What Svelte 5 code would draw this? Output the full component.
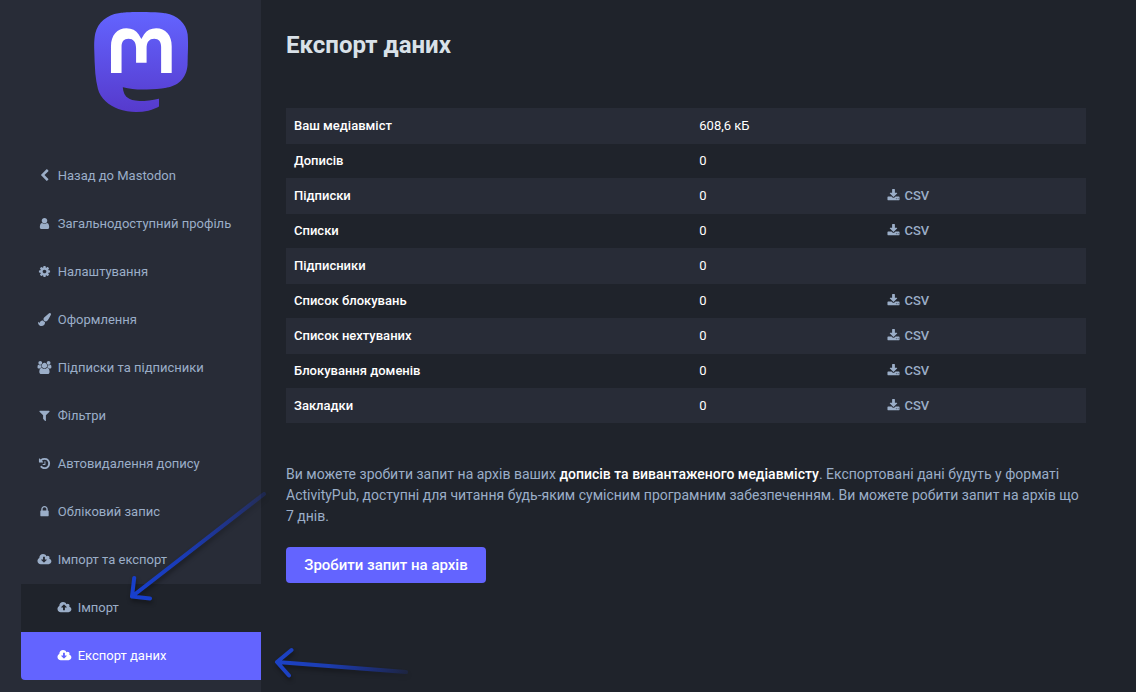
<script>
  const cloud = 'm640 WWWq0 159-112.5 271.5t-271.5 112.5h-1088q-185 0-316.5-131.5t-131.5-316.5q0-130 70-240t188-165q-2-30-2-43 0-212 150-362t362-150q156 0 285.5 87t188.5 231q71-62 166-62 106 0 181 75t75 181q0 76-41 138 130 31 213.5 135.5t83.5 238.5z';

  // Glyphs drawn on a 1792-unit em; w is the advance of the viewBox.
  const icons = {
    back: { w: 1792, d: 'M1427 301l-531 531 531 531q19 19 19 45t-19 45l-166 166q-19 19-45 19t-45-19l-742-742q-19-19-19-45t19-45l742-742q19-19 45-19t45 19l166 166q19 19 19 45t-19 45z' },
    user: { w: 1792, d: 'M1536 1399q0 109-62.5 187t-150.5 78h-854q-88 0-150.5-78t-62.5-187q0-85 8.5-160.5t31.5-152 58.5-131 94-89 134.5-34.5q131 128 313 128t313-128q76 0 134.5 34.5t94 89 58.5 131 31.5 152 8.5 160.5zm-256-887q0 159-112.5 271.5t-271.5 112.5-271.5-112.5-112.5-271.5 112.5-271.5 271.5-112.5 271.5 112.5 112.5 271.5z' },
    cog: { w: 1792, d: 'M1152 896q0-106-75-181t-181-75-181 75-75 181 75 181 181 75 181-75 75-181zm512-109v222q0 12-8 23t-20 13l-185 28q-19 54-39 91 35 50 107 138 10 12 10 25t-9 23q-27 37-99 108t-94 71q-12 0-26-9l-138-108q-44 23-91 38-16 136-29 186-7 28-36 28h-222q-14 0-24.5-8.5t-11.5-21.5l-28-184q-49-16-90-37l-141 107q-10 9-25 9-14 0-25-11-126-114-165-168-7-10-7-23 0-12 8-23 15-21 51-66.5t54-70.5q-27-50-41-99l-183-27q-13-2-21-12.5t-8-23.5v-222q0-12 8-23t19-13l186-28q14-46 39-92-40-57-107-138-10-12-10-24 0-10 9-23 26-36 98.5-107.5t94.5-71.5q13 0 26 10l138 107q44-23 91-38 16-136 29-186 7-28 36-28h222q14 0 24.5 8.5t11.5 21.5l28 184q49 16 90 37l142-107q9-9 24-9 13 0 25 10 129 119 165 170 7 8 7 22 0 12-8 23-15 21-51 66.5t-54 70.5q26 50 41 98l183 28q13 2 21 12.5t8 23.5z' },
    brush: { w: 1792, d: 'M1615 0q70 0 122.5 46.5t52.5 116.5q0 63-45 151-332 629-465 752-97 91-218 91-126 0-216.5-92.5t-90.5-219.5q0-128 92-212l638-579q59-54 130-54zm-909 1034q39 76 106.5 130t150.5 76l1 71q4 213-129.5 347t-348.5 134q-123 0-218-46.5t-152.5-127.5-86.5-183-29-220q7 5 41 30t62 44.5 59 36.5 46 17q41 0 55-37 25-66 57.5-112.5t69.5-76 88-47.5 103-25.5 125-10.5z' },
    users: { w: 2048, d: 'M657 896q-162 5-265 128h-134q-82 0-138-40.5t-56-118.5q0-353 124-353 6 0 43.5 21t97.5 42.5 119 21.5q67 0 133-23-5 37-5 66 0 159 93 256zm1071 637q0 120-73 189.5t-194 69.5h-874q-121 0-194-69.5t-73-189.5q0-53 3.5-103.5t14-109 26.5-108.5 43-97.5 62-81 85.5-53.5 111.5-20q10 0 43 21.5t73 48 107 48 135 21.5 135-21.5 107-48 73-48 43-21.5q61 0 111.5 20t85.5 53.5 62 81 43 97.5 26.5 108.5 14 109 3.5 103.5zm-1024-1277q0 106-75 181t-181 75-181-75-75-181 75-181 181-75 181 75 75 181zm704 384q0 159-112.5 271.5t-271.5 112.5-271.5-112.5-112.5-271.5 112.5-271.5 271.5-112.5 271.5 112.5 112.5 271.5zm576 225q0 78-56 118.5t-138 40.5h-134q-103-123-265-128 93-97 93-256 0-29-5-66 66 23 133 23 59 0 119-21.5t97.5-42.5 43.5-21q124 0 124 353zm-128-609q0 106-75 181t-181 75-181-75-75-181 75-181 181-75 181 75 75 181z' },
    filter: { w: 1792, d: 'M1595 295q17 41-14 70l-493 493v742q0 42-39 59-13 5-25 5-27 0-45-19l-256-256q-19-19-19-45v-486l-493-493q-31-29-14-70 17-39 59-39h1280q42 0 59 39z' },
    history: { w: 1792, d: 'M1664 896q0 156-61 298t-164 245-245 164-298 61q-172 0-327-72.5t-264-204.5q-7-10-6.5-22.5t8.5-20.5l137-138q10-9 25-9 16 2 23 12 73 95 179 147t225 52q104 0 198.5-40.5t163.5-109.5 109.5-163.5 40.5-198.5-40.5-198.5-109.5-163.5-163.5-109.5-198.5-40.5q-98 0-188 35.5t-160 101.5l137 138q31 30 14 69-17 40-59 40h-448q-26 0-45-19t-19-45v-448q0-42 40-59 39-17 69 14l130 129q107-101 244.5-156.5t284.5-55.5q156 0 298 61t245 164 164 245 61 298zm-640-288v448q0 14-9 23t-23 9h-320q-14 0-23-9t-9-23v-64q0-14 9-23t23-9h224v-352q0-14 9-23t23-9h64q14 0 23 9t9 23z' },
    lock: { w: 1792, d: 'M640 768h512v-192q0-106-75-181t-181-75-181 75-75 181v192zm832 96v576q0 40-28 68t-68 28h-960q-40 0-68-28t-28-68v-576q0-40 28-68t68-28h32v-192q0-184 132-316t316-132 316 132 132 316v192h32q40 0 68 28t28 68z' },
    cloudDown: { w: 2048, d: 'M1344 928q0-14-9-23t-23-9h-224v-352q0-13-9.5-22.5t-22.5-9.5h-192q-13 0-22.5 9.5t-9.5 22.5v352h-224q-13 0-22.5 9.5t-9.5 22.5q0 14 9 23l352 352q9 9 23 9t23-9l351-351q10-12 10-24z' + cloud.replace('WWW', '224') },
    cloudUp: { w: 2048, d: 'M1344 864q0-14-9-23l-352-352q-9-9-23-9t-23 9l-351 351q-10 12-10 24 0 14 9 23t23 9h224v352q0 13 9.5 22.5t22.5 9.5h192q13 0 22.5-9.5t9.5-22.5v-352h224q13 0 22.5-9.5t9.5-22.5z' + cloud.replace('WWW', '288') },
    download: { w: 1792, d: 'M1344 1344q0-26-19-45t-45-19-45 19-19 45 19 45 45 19 45-19 19-45zm256 0q0-26-19-45t-45-19-45 19-19 45 19 45 45 19 45-19 19-45zm128-224v320q0 40-28 68t-68 28h-1472q-40 0-68-28t-28-68v-320q0-40 28-68t68-28h465l135 136q58 56 136 56t136-56l136-136h464q40 0 68 28t28 68zm-325-569q17 41-14 70l-448 448q-18 19-45 19t-45-19l-448-448q-31-29-14-70 17-39 59-39h256v-448q0-26 19-45t45-19h256q26 0 45 19t19 45v448h256q42 0 59 39z' }
  };

  const nav = [
    { icon: 'back', label: 'Назад до Mastodon' },
    { icon: 'user', label: 'Загальнодоступний профіль' },
    { icon: 'cog', label: 'Налаштування' },
    { icon: 'brush', label: 'Оформлення' },
    { icon: 'users', label: 'Підписки та підписники' },
    { icon: 'filter', label: 'Фільтри' },
    { icon: 'history', label: 'Автовидалення допису' },
    { icon: 'lock', label: 'Обліковий запис' },
    {
      icon: 'cloudDown',
      label: 'Імпорт та експорт',
      children: [
        { icon: 'cloudUp', label: 'Імпорт' },
        { icon: 'cloudDown', label: 'Експорт даних', selected: true }
      ]
    }
  ];

  const rows = [
    { name: 'Ваш медіавміст', value: '608,6 кБ' },
    { name: 'Дописів', value: '0' },
    { name: 'Підписки', value: '0', csv: true },
    { name: 'Списки', value: '0', csv: true },
    { name: 'Підписники', value: '0' },
    { name: 'Список блокувань', value: '0', csv: true },
    { name: 'Список нехтуваних', value: '0', csv: true },
    { name: 'Блокування доменів', value: '0', csv: true },
    { name: 'Закладки', value: '0', csv: true }
  ];
</script>

{#snippet glyph(name)}
  <span class="fw">
    <svg class:wide={icons[name].w > 1792} viewBox="0 0 {icons[name].w} 1792" aria-hidden="true">
      <path d={icons[name].d} />
    </svg>
  </span>
{/snippet}

<div class="layout">
  <aside class="sidebar">
    <a class="logo" href="#home" aria-label="Mastodon">
      <svg viewBox="0 0 74 79" width="94" height="100">
        <defs>
          <linearGradient id="brand" x1="0" y1="0" x2="0" y2="1">
            <stop offset="0" stop-color="#6364ff" />
            <stop offset="1" stop-color="#563acc" />
          </linearGradient>
        </defs>
        <path fill="url(#brand)" d="M73.8393 17.4898C72.6973 9.00165 65.2994 2.31235 56.5296 1.01614C55.05 0.797115 49.4441 0 36.4582 0H36.3612C23.3717 0 20.585 0.797115 19.1054 1.01614C10.5798 2.27644 2.79399 8.28712 0.904997 16.8758C-0.00358524 21.1056 -0.100549 25.7949 0.0682394 30.0965C0.308852 36.2651 0.355538 42.423 0.91577 48.5665C1.30307 52.6474 1.97872 56.6957 2.93763 60.6812C4.73325 68.042 12.0019 74.1676 19.1233 76.6666C26.7478 79.2728 34.9474 79.7055 42.8039 77.9162C43.6682 77.7151 44.5217 77.4817 45.3645 77.216C47.275 76.6092 49.5123 75.9305 51.1571 74.7385C51.1797 74.7217 51.1982 74.7001 51.2112 74.6753C51.2243 74.6504 51.2316 74.6229 51.2325 74.5948V68.6416C51.2321 68.6154 51.2259 68.5896 51.2142 68.5661C51.2025 68.5426 51.1858 68.522 51.1651 68.5058C51.1444 68.4896 51.1204 68.4783 51.0948 68.4726C51.0692 68.4669 51.0426 68.467 51.0171 68.4729C45.9835 69.675 40.8254 70.2777 35.6502 70.2682C26.7439 70.2682 24.3486 66.042 23.6626 64.2826C23.1113 62.762 22.7612 61.1759 22.6212 59.5646C22.6197 59.5375 22.6247 59.5105 22.6357 59.4857C22.6466 59.4609 22.6633 59.4391 22.6843 59.422C22.7053 59.4048 22.73 59.3929 22.7565 59.3871C22.783 59.3813 22.8104 59.3818 22.8367 59.3886C27.7864 60.5826 32.8604 61.1853 37.9522 61.1839C39.1768 61.1839 40.3978 61.1839 41.6224 61.1516C46.7435 61.008 52.1411 60.7459 57.1796 59.7621C57.3053 59.7369 57.431 59.7154 57.5387 59.6831C65.4861 58.157 73.0493 53.3672 73.8178 41.2381C73.8465 40.7606 73.9184 36.2364 73.9184 35.7409C73.9219 34.0569 74.4606 23.7949 73.8393 17.4898Z" />
        <path fill="#fff" d="M61.2484 27.0263V48.114H52.8916V27.6475C52.8916 23.3388 51.096 21.1413 47.4437 21.1413C43.4287 21.1413 41.4177 23.7409 41.4177 28.8755V40.0782H33.1111V28.8755C33.1111 23.7409 31.0965 21.1413 27.0815 21.1413C23.4507 21.1413 21.6371 23.3388 21.6371 27.6475V48.114H13.2839V27.0263C13.2839 22.7176 14.384 19.2946 16.5843 16.7572C18.8539 14.2258 21.8311 12.926 25.5264 12.926C29.8036 12.926 33.0357 14.5705 35.1905 17.8559L37.2698 21.346L39.3527 17.8559C41.5074 14.5705 44.7395 12.926 49.0095 12.926C52.7013 12.926 55.6784 14.2258 57.9553 16.7572C60.1531 19.2922 61.2508 22.7152 61.2484 27.0263Z" />
      </svg>
    </a>
    <ul class="nav">
      {#each nav as item}
        <li>
          <a href="#nav">{@render glyph(item.icon)}{item.label}</a>
          {#if item.children}
            <ul class="sub">
              {#each item.children as child}
                <li><a class:selected={child.selected} href="#nav">{@render glyph(child.icon)}{child.label}</a></li>
              {/each}
            </ul>
          {/if}
        </li>
      {/each}
    </ul>
  </aside>

  <main class="content">
    <h2>Експорт даних</h2>
    <table>
      <tbody>
        {#each rows as row}
          <tr>
            <th>{row.name}</th>
            <td>{row.value}</td>
            <td>
              {#if row.csv}<a class="csv" href="#csv">{@render glyph('download')}CSV</a>{/if}
            </td>
          </tr>
        {/each}
      </tbody>
    </table>
    <p>Ви можете зробити запит на архів ваших <strong>дописів та вивантаженого медіавмісту</strong>. Експортовані дані будуть у форматі ActivityPub, доступні для читання будь-яким сумісним програмним забезпеченням. Ви можете робити запит на архів що 7 днів.</p>
    <button type="button">Зробити запит на архів</button>
  </main>

  <svg class="arrows" viewBox="0 0 1136 692" width="1136" height="692" aria-hidden="true">
    <defs>
      <linearGradient id="fadeA" gradientUnits="userSpaceOnUse" x1="132" y1="597" x2="265" y2="494">
        <stop offset="0" stop-color="#173fce" />
        <stop offset="0.4" stop-color="#1a3bb4" />
        <stop offset="1" stop-color="#1c3acb" stop-opacity="0.22" />
      </linearGradient>
      <linearGradient id="fadeB" gradientUnits="userSpaceOnUse" x1="276" y1="662" x2="406" y2="672">
        <stop offset="0" stop-color="#1c42c6" />
        <stop offset="0.4" stop-color="#1c3db0" />
        <stop offset="1" stop-color="#1c3acb" stop-opacity="0.15" />
      </linearGradient>
    </defs>
    <g fill="none" stroke-width="4" stroke-linecap="round" stroke-linejoin="round">
      <path stroke="url(#fadeA)" d="M264 494L132 596.5M134.2 578L132 596.5L150 598.5" />
      <path stroke="url(#fadeB)" d="M406 672L277 662M291.5 650L277 662L289 675.5" />
    </g>
  </svg>
</div>

<style>
  :global(body) {
    background: #1f232b;
  }

  .layout {
    position: relative;
    display: flex;
    height: 692px;
    overflow: hidden;
    font: 13px/18px Roboto, sans-serif;
    color: #fff;
  }

  a {
    color: inherit;
    text-decoration: none;
  }

  .sidebar {
    box-sizing: border-box;
    flex: none;
    width: 261px;
    padding-left: 21px;
    background: #282c37;
  }

  .logo {
    display: flex;
    justify-content: center;
    padding: 12px 0 40px;
  }

  ul {
    list-style: none;
    margin: 0;
    padding: 0;
  }

  .nav {
    color: #9baec8;
  }

  .nav a {
    display: flex;
    padding: 15px;
    white-space: nowrap;
  }

  .sub {
    background: #1f232b;
    border-radius: 0 0 0 4px;
    overflow: hidden;
  }

  .sub a {
    padding-left: 35px;
  }

  .sub .selected {
    color: #fff;
    background: #6364ff;
  }

  .fw {
    display: inline-flex;
    flex: none;
    justify-content: center;
    width: 16.7px;
    margin-right: 5px;
  }

  .fw svg {
    flex: none;
    width: 13px;
    height: 13px;
    margin-top: 2px;
    fill: currentColor;
  }

  .fw svg.wide {
    width: 14.86px;
  }

  .content {
    flex: none;
    width: 800px;
    padding: 27px 25px 0;
  }

  h2 {
    margin: 0 0 45px;
    font-size: 24px;
    line-height: 36px;
    font-weight: 700;
    color: #d9e1e8;
  }

  table {
    width: 800px;
    table-layout: fixed;
    border-collapse: separate;
    border-spacing: 0;
  }

  tr {
    height: 35px;
  }

  tr:nth-child(odd) {
    background: #282c37;
  }

  tr:nth-child(odd):not(:last-child) {
    box-shadow: 0 1px #282c37;
  }

  th,
  td {
    box-sizing: border-box;
    height: 35px;
    padding: 9px 8px 8px;
    line-height: 18px;
    text-align: left;
    vertical-align: top;
    font-weight: 400;
  }

  th {
    width: 405px;
    font-weight: 500;
  }

  td:nth-child(2) {
    width: 188px;
    padding-left: 8.3px;
  }

  .csv {
    display: flex;
    font-weight: 500;
    color: #9baec8;
  }

  .csv .fw {
    width: 13px;
    margin-right: 4.5px;
  }

  p {
    margin: 41px 0 20px;
    font-size: 14px;
    line-height: 21px;
    color: #9baec8;
  }

  strong {
    font-weight: 500;
    color: #fff;
  }

  button {
    display: block;
    width: 200px;
    height: 36px;
    padding: 0;
    border: 0;
    border-radius: 4px;
    font: 500 15px/36px Roboto, sans-serif;
    text-align: center;
    white-space: nowrap;
    color: #fff;
    background: #6364ff;
  }

  .arrows {
    position: absolute;
    inset: 0;
    pointer-events: none;
    filter: drop-shadow(1px 3px 2px rgba(0, 0, 0, 0.35));
  }
</style>
